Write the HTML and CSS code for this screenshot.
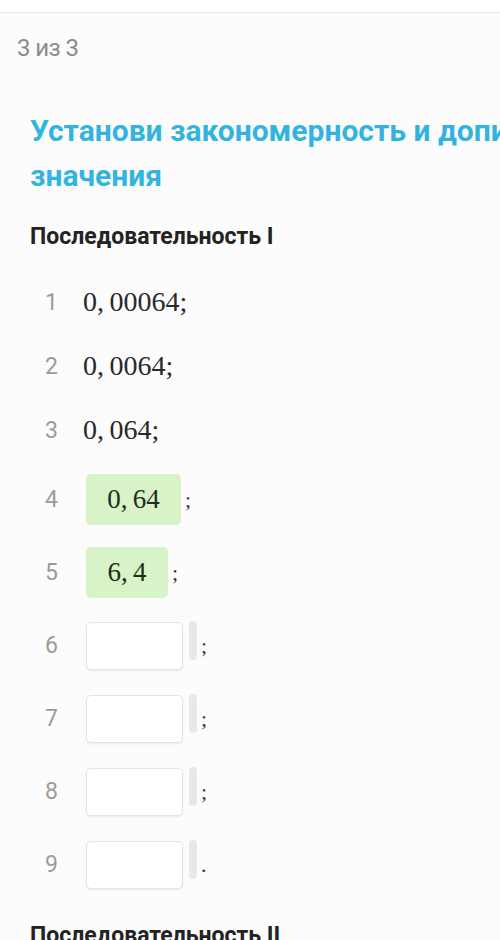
FILE: index.html
```html
<!DOCTYPE html>
<html lang="ru">
  <head>
    <meta charset="UTF-8" />
    <meta name="viewport" content="width=device-width, initial-scale=1.0" />
    <title>Установи закономерность</title>
    <link rel="stylesheet" href="styles.css">
  </head>
  <body>
    <div class="topbar"></div>
    <div class="counter">3 из 3</div>

    <div class="task">
      <h2 class="task-title">Установи закономерность и допиши значения</h2>

      <!-- sequence I -->
      <h3 class="seq-title">Последовательность I</h3>
      <ol class="seq">
        <li class="row"><span class="num">1</span><span class="val">0,&#8201;00064;</span></li>
        <li class="row"><span class="num">2</span><span class="val">0,&#8201;0064;</span></li>
        <li class="row"><span class="num">3</span><span class="val">0,&#8201;064;</span></li>
        <li class="row row-box first-box">
          <span class="num">4</span>
          <span class="answer answer-ok wide">0,&#8201;64</span>
          <span class="punct">;</span>
        </li>
        <li class="row row-box">
          <span class="num">5</span>
          <span class="answer answer-ok">6,&#8201;4</span>
          <span class="punct">;</span>
        </li>
        <li class="row row-box">
          <span class="num">6</span>
          <span class="answer answer-empty"></span>
          <span class="handle"></span>
          <span class="punct">;</span>
        </li>
        <li class="row row-box">
          <span class="num">7</span>
          <span class="answer answer-empty"></span>
          <span class="handle"></span>
          <span class="punct">;</span>
        </li>
        <li class="row row-box">
          <span class="num">8</span>
          <span class="answer answer-empty"></span>
          <span class="handle"></span>
          <span class="punct">;</span>
        </li>
        <li class="row row-box">
          <span class="num">9</span>
          <span class="answer answer-empty"></span>
          <span class="handle"></span>
          <span class="punct">.</span>
        </li>
      </ol>

      <!-- sequence II -->
      <h3 class="seq-title seq-next">Последовательность II</h3>
    </div>
  </body>
</html>
```

FILE: styles.css
```css
html, body {
  margin: 0;
  padding: 0;
  overflow: hidden;
}
body {
  background: #fcfcfc;
  font-family: Roboto, "Noto Sans", sans-serif;
  color: #222;
  width: 500px;
}
.topbar {
  height: 12px;
  background: #fff;
  border-bottom: 1px solid #e3e3e3;
}
.counter {
  padding: 21px 0 0 17px;
  font-size: 24px;
  line-height: 28px;
  color: #8c8c8c;
  letter-spacing: -0.6px;
}
.task {
  width: 600px;
  padding: 0 30px;
}
.task-title {
  margin: 46px 0 0;
  font-size: 30px;
  line-height: 45px;
  font-weight: 700;
  color: #33b4e0;
  width: 540px;
}
.seq-title {
  margin: 25px 0 0;
  font-size: 23px;
  line-height: 28px;
  font-weight: 700;
  color: #232323;
}
.seq-next {
  margin-top: 21px;
}
.seq {
  list-style: none;
  margin: 19px 0 0;
  padding: 0;
}
.row {
  display: flex;
  align-items: center;
  height: 64px;
}
.row-box {
  height: 73px;
}
.first-box {
  margin-top: 1px;
}
.num {
  width: 36px;
  padding-left: 15px;
  box-sizing: border-box;
  font-size: 23px;
  color: #9b9b9b;
}
.val {
  margin-left: 17px;
  font-family: "Liberation Serif", "DejaVu Serif", serif;
  font-size: 28px;
  color: #2a2a2a;
}
.answer {
  margin-left: 20px;
  width: 82px;
  height: 51px;
  border-radius: 5px;
  display: flex;
  align-items: center;
  justify-content: center;
  box-sizing: border-box;
  font-family: "Liberation Serif", "DejaVu Serif", serif;
  font-size: 27px;
  color: #1f2d1a;
}
.answer-ok {
  background: #d8f3c8;
}
.wide {
  width: 95px;
}
.answer-empty {
  width: 97px;
  height: 48px;
  background: #fff;
  border: 1px solid #e4e4e4;
  box-shadow: 0 1px 2px rgba(0, 0, 0, 0.08);
}
.handle {
  width: 8px;
  height: 39px;
  margin-left: 6px;
  align-self: flex-start;
  margin-top: 12px;
  border-radius: 4px;
  background: #e7e8e8;
}
.punct {
  margin-left: 4px;
  font-family: "Liberation Serif", serif;
  font-size: 22px;
  color: #333;
}
```
